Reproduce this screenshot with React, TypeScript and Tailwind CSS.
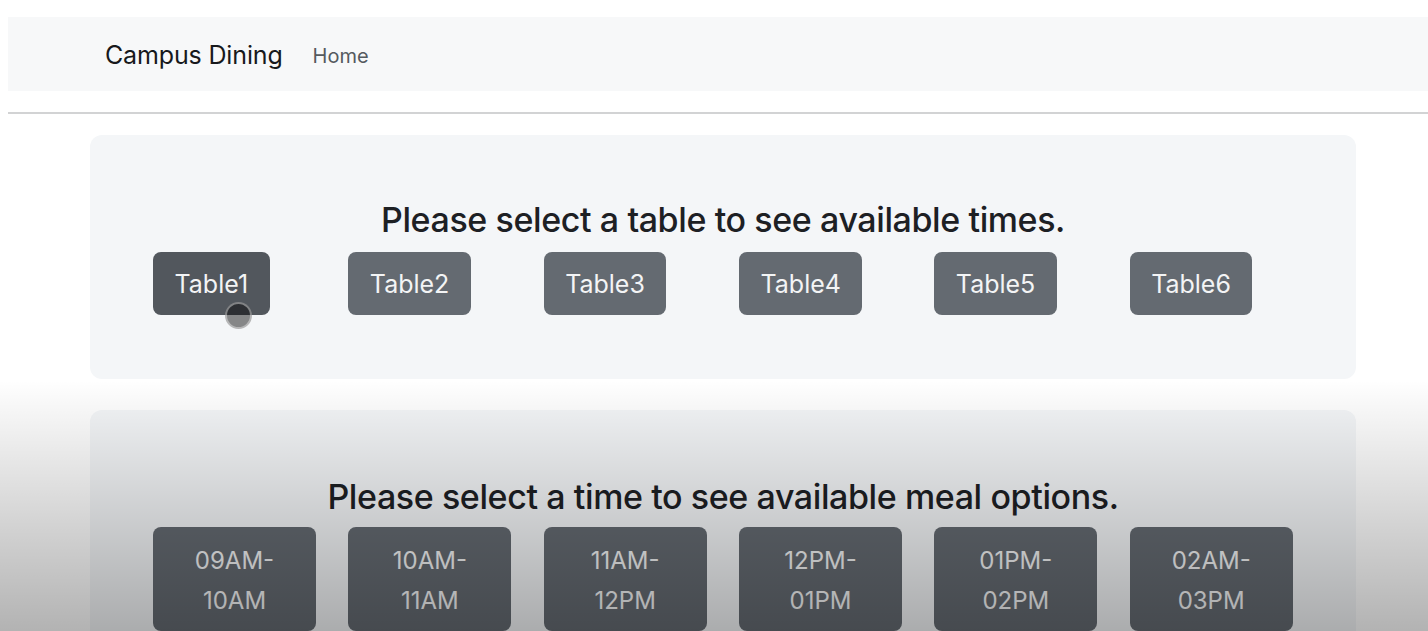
import React from 'react'

const tables = ['Table1', 'Table2', 'Table3', 'Table4', 'Table5', 'Table6']
const times = [
  ['09AM-', '10AM'],
  ['10AM-', '11AM'],
  ['11AM-', '12PM'],
  ['12PM-', '01PM'],
  ['01PM-', '02PM'],
  ['02AM-', '03PM'],
]

function Navbar() {
  return (
    <div className="pt-[17px] pl-[8px]">
      <nav className="h-[74px] bg-[#f7f8f9] flex items-center pl-[97px] pt-[3px]">
        <span className="text-[25px] text-[#17191c] tracking-[-0.15px]">Campus Dining</span>
        <span className="ml-[30px] text-[20px] text-[#555a5f]">Home</span>
      </nav>
      <div className="mt-[21px] h-[2px] bg-[#d2d3d4]" />
    </div>
  )
}

export default function App() {
  return (
    <div
      className="relative h-[631px] overflow-hidden bg-white"
      style={{ fontFamily: 'Inter, "Noto Sans", sans-serif' }}
    >
      <Navbar />

      <div className="mx-[90px] w-[1266px]">
        <section className="mt-[21px] rounded-[12px] bg-[#f4f6f8] pt-[64px] pb-[64px] px-[47px]">
          <h2 className="text-center text-[34px] font-medium leading-[42px] tracking-[-0.4px] text-[#1d2024] mb-[11px]">
            Please select a table to see available times.
          </h2>
          <div className="grid grid-cols-6">
            {tables.map((t, i) => (
              <div key={t} className="px-[16px]">
                <button
                  className={`relative h-[63px] rounded-[8px] px-[21.5px] pt-[2px] text-[25px] text-[#f3f4f5] ${
                    i === 0 ? 'bg-[#52575d]' : 'bg-[#646a71]'
                  }`}
                >
                  {t}
                  {i === 0 && (
                    <span className="absolute left-[72px] top-[50px] h-[27px] w-[27px] rounded-full border-[2px] border-white/40 bg-black/45" />
                  )}
                </button>
              </div>
            ))}
          </div>
        </section>

        <section className="mt-[31px] rounded-[12px] bg-[#f4f6f8] pt-[66px] pb-[40px] px-[47px]">
          <h2 className="text-center text-[34px] font-medium leading-[42px] tracking-[-0.4px] text-[#1d2024] mb-[9px]">
            Please select a time to see available meal options.
          </h2>
          <div className="grid grid-cols-6">
            {times.map(([a, b]) => (
              <div key={a} className="px-[16px]">
                <button className="w-[163px] rounded-[8px] bg-[#646a71] pt-[14px] pb-[10px] text-[24px] leading-[40px] text-[#f3f4f5]">
                  {a}
                  <br />
                  {b}
                </button>
              </div>
            ))}
          </div>
        </section>
      </div>

      <div className="pointer-events-none absolute inset-x-0 top-[380px] bottom-0 bg-linear-to-b from-transparent to-black/30" />
    </div>
  )
}
